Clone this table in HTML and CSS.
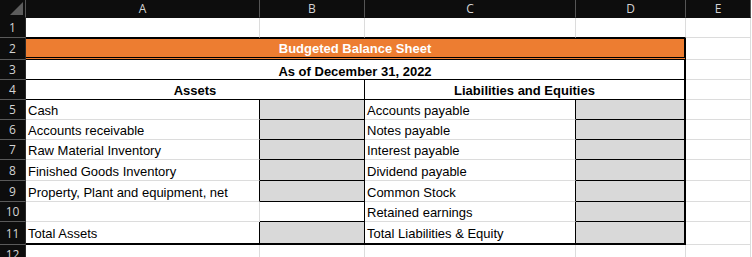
FILE: index.html
```html
<!DOCTYPE html>
<html>
<head>
<meta charset="utf-8">
<link rel="stylesheet" href="styles.css">
</head>
<body>
<div class="sheet">
  <div class="corner"><svg width="25" height="17" viewBox="0 0 25 17"><polygon points="10,15 23,15 23,2" fill="#5c5c5c"/></svg></div>
  <div class="ch">A</div><div class="ch">B</div><div class="ch">C</div><div class="ch">D</div><div class="ch">E</div>

  <div class="rh">1</div>
  <div class="c tb"></div><div class="c tb"></div><div class="c tb"></div><div class="c tb"></div><div class="c"></div>

  <div class="rh">2</div>
  <div class="c title">Budgeted Balance Sheet</div><div class="c"></div>

  <div class="rh">3</div>
  <div class="c sub">As of December 31, 2022</div><div class="c"></div>

  <div class="rh">4</div>
  <div class="c head-a">Assets</div><div class="c head-l">Liabilities and Equities</div><div class="c"></div>

  <div class="rh">5</div>
  <div class="c lab-a">Cash</div><div class="c box-b"></div><div class="c lab-c">Accounts payable</div><div class="c box-d"></div><div class="c"></div>

  <div class="rh">6</div>
  <div class="c lab-a">Accounts receivable</div><div class="c box-b"></div><div class="c lab-c">Notes payable</div><div class="c box-d"></div><div class="c"></div>

  <div class="rh">7</div>
  <div class="c lab-a">Raw Material Inventory</div><div class="c box-b"></div><div class="c lab-c">Interest payable</div><div class="c box-d"></div><div class="c"></div>

  <div class="rh">8</div>
  <div class="c lab-a">Finished Goods Inventory</div><div class="c box-b"></div><div class="c lab-c">Dividend payable</div><div class="c box-d"></div><div class="c"></div>

  <div class="rh">9</div>
  <div class="c lab-a">Property, Plant and equipment, net</div><div class="c box-b"></div><div class="c lab-c">Common Stock</div><div class="c box-d"></div><div class="c"></div>

  <div class="rh">10</div>
  <div class="c"></div><div class="c empty-b"></div><div class="c lab-c">Retained earnings</div><div class="c box-d"></div><div class="c"></div>

  <div class="rh">11</div>
  <div class="c lab-a last">Total Assets</div><div class="c box-b last"></div><div class="c lab-c last">Total Liabilities &amp; Equity</div><div class="c box-d last"></div><div class="c"></div>

  <div class="rh">12</div>
  <div class="c"></div><div class="c"></div><div class="c"></div><div class="c"></div><div class="c"></div>
</div>
</body>
</html>
```
FILE: styles.css
```css
html, body {
  margin: 0;
  padding: 0;
  background: #ffffff;
  overflow: hidden;
}

.sheet {
  display: grid;
  grid-template-columns: 26px 234px 105px 211px 110px 65px 1px;
  grid-template-rows: 18px 20px 22px 20px 20px 20px 20px 20px 21px 21px 20px 23px 20px;
  font-family: "Liberation Sans", Arial, sans-serif;
}

.corner {
  grid-column: 1;
  background: #0d0d0d;
  box-sizing: border-box;
  border-right: 1px solid #555555;
  border-bottom: 1px solid #0d0d0d;
  display: flex;
}

.ch {
  background: #0d0d0d;
  color: #d4d4d4;
  box-sizing: border-box;
  border-right: 1px solid #555555;
  border-bottom: 1px solid #0d0d0d;
  font-family: "Open Sans", "Noto Sans", sans-serif;
  font-size: 12px;
  display: flex;
  align-items: center;
  justify-content: center;
}

.rh {
  grid-column: 1;
  background: #0d0d0d;
  color: #d4d4d4;
  box-sizing: border-box;
  border-right: 1px solid #2a2a2a;
  border-bottom: 1px solid #5a5a5a;
  font-family: "Open Sans", "Noto Sans", sans-serif;
  font-size: 12px;
  display: flex;
  align-items: center;
  justify-content: center;
}

.c {
  box-sizing: border-box;
  border-right: 1px solid #dcdcdc;
  border-bottom: 1px solid #dcdcdc;
  display: flex;
  align-items: center;
  font-size: 13px;
  line-height: 15px;
  padding-left: 2px;
  padding-top: 2px;
  color: #000000;
  white-space: nowrap;
  overflow: hidden;
}

.tb {
  border-bottom-color: #000000;
}

.title {
  grid-column: span 4;
  background: #ed7d31;
  color: #ffffff;
  font-weight: bold;
  justify-content: center;
  align-items: flex-end;
  padding-left: 0;
  padding-top: 0;
  padding-bottom: 1px;
  border-top: 1px solid #000000;
  border-bottom: 3px double #000000;
  border-right: 2px solid #000000;
}

.sub {
  grid-column: span 4;
  font-weight: bold;
  justify-content: center;
  align-items: flex-end;
  padding-left: 0;
  padding-top: 0;
  border-bottom-color: #000000;
  border-right: 2px solid #000000;
}

.head-a {
  grid-column: span 2;
  font-weight: bold;
  justify-content: center;
  align-items: flex-end;
  padding-left: 0;
  padding-top: 0;
  padding-bottom: 1px;
  border-bottom-color: #000000;
  border-right-color: #000000;
}

.head-l {
  grid-column: span 2;
  font-weight: bold;
  justify-content: center;
  align-items: flex-end;
  padding-left: 0;
  padding-top: 0;
  padding-bottom: 1px;
  border-bottom-color: #000000;
  border-right: 2px solid #000000;
}

.lab-a {
  border-right-color: #000000;
}

.lab-c {
  border-right-color: #000000;
}

.box-b {
  background: #d9d9d9;
  border-right-color: #000000;
  border-bottom-color: #000000;
}

.empty-b {
  border-right-color: #000000;
  border-bottom-color: #000000;
}

.box-d {
  background: #d9d9d9;
  border-right: 2px solid #000000;
  border-bottom-color: #000000;
}

.last {
  border-bottom: 2px solid #000000;
}
```
